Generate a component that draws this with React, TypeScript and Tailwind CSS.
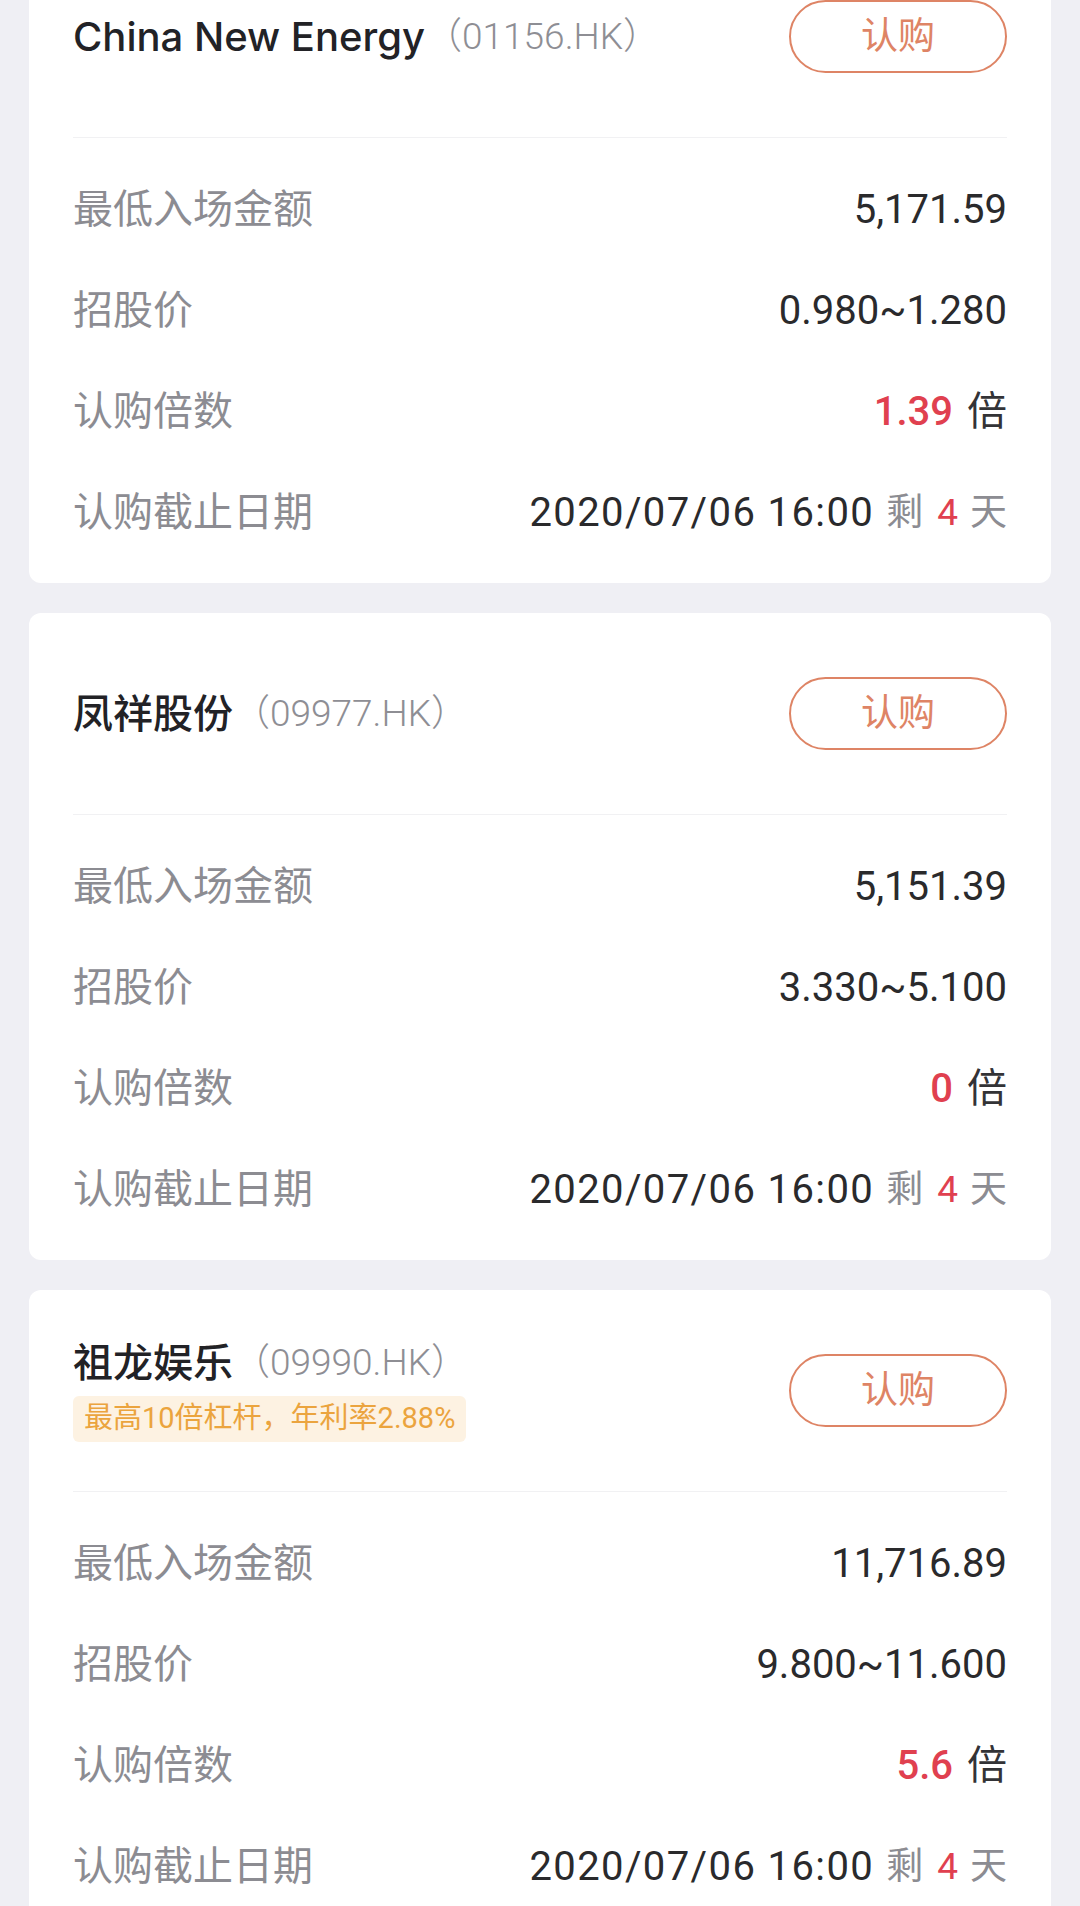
import React from 'react';

interface IpoItem {
    name: string
    code: string
    tag?: string
    minAmount: string
    price: string
    multiple: string
    deadline: string
    days: string
}

const ipoList: IpoItem[] = [
    { name: 'China New Energy', code: '01156.HK', minAmount: '5,171.59', price: '0.980~1.280', multiple: '1.39', deadline: '2020/07/06 16:00', days: '4' },
    { name: '凤祥股份', code: '09977.HK', minAmount: '5,151.39', price: '3.330~5.100', multiple: '0', deadline: '2020/07/06 16:00', days: '4' },
    { name: '祖龙娱乐', code: '09990.HK', tag: '最高10倍杠杆，年利率2.88%', minAmount: '11,716.89', price: '9.800~11.600', multiple: '5.6', deadline: '2020/07/06 16:00', days: '4' },
]

const Row: React.FC<{ label: string, children: React.ReactNode }> = ({ label, children }) => {
    return (
        <div className="h-[101px] flex items-center justify-between">
            <p className="text-[40px] text-[#8c8c92]">{label}</p>
            <div className="flex items-center text-[40px] text-[#2a2a2c]">{children}</div>
        </div>
    )
}

const IpoCard: React.FC<{ item: IpoItem }> = ({ item }) => {
    return (
        <div className="w-full bg-white rounded-[12px] px-[44px]">
            <div className="h-[202px] flex items-center justify-between border-b border-[#f1f1f3]">
                <div className="flex flex-col">
                    <div className="flex items-center leading-[48px]">
                        <span className="text-[40px] font-medium text-[#222226] font-['Inter','Noto_Sans_CJK_SC',sans-serif]">{item.name}</span>
                        <span className="text-[37px] font-light text-[#8e8e94]">（{item.code}）</span>
                    </div>
                    {item.tag && (
                        <div className="mt-[9px] self-start h-[46px] flex items-center px-[11px] rounded-[6px] bg-[#fdf2e2]">
                            <span className="text-[29px] text-[#eba43e]">{item.tag}</span>
                        </div>
                    )}
                </div>
                <button className="w-[218px] h-[73px] rounded-full border-[2.5px] border-[#de8465] text-[37px] text-[#de8465] flex items-center justify-center">
                    认购
                </button>
            </div>
            <div className="pt-[21px] pb-[20px]">
                <Row label="最低入场金额">{item.minAmount}</Row>
                <Row label="招股价">{item.price}</Row>
                <Row label="认购倍数">
                    <span className="font-medium text-[#e0404f]">{item.multiple}</span>
                    <span className="ml-[14px] text-[#333336]">倍</span>
                </Row>
                <Row label="认购截止日期">
                    <span className="tracking-[1.4px]">{item.deadline}</span>
                    <span className="ml-[12px] text-[37px] text-[#8c8c92]">剩</span>
                    <span className="ml-[14px] text-[37px] text-[#e0404f]">{item.days}</span>
                    <span className="ml-[12px] text-[37px] text-[#8c8c92]">天</span>
                </Row>
            </div>
        </div>
    )
}

export default function App() {
    return (
        <div className="w-full min-h-screen bg-[#efeff4] px-[29px] overflow-hidden font-['Roboto','Noto_Sans_CJK_SC',sans-serif]">
            <div className="-mt-[64px] flex flex-col gap-[30px] pb-[40px]">
                {ipoList.map((item) => (
                    <IpoCard key={item.code} item={item} />
                ))}
            </div>
        </div>
    )
}
